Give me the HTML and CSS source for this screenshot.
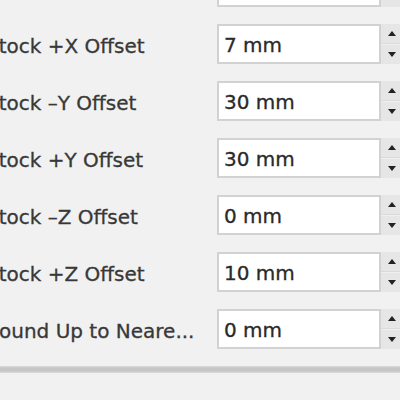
FILE: index.html
```html
<!DOCTYPE html>
<html>
<head>
<meta charset="utf-8">
<link rel="stylesheet" href="styles.css">
</head>
<body>
<div class="panel">
  <div class="rows">
    <div class="row"><span class="label">Stock –X Offset</span><div class="field"><span class="value">7 mm</span><div class="spin"><span class="up"></span><span class="down"></span></div></div></div>
    <div class="row"><span class="label">Stock +X Offset</span><div class="field"><span class="value">7 mm</span><div class="spin"><span class="up"></span><span class="down"></span></div></div></div>
    <div class="row"><span class="label">Stock –Y Offset</span><div class="field"><span class="value">30 mm</span><div class="spin"><span class="up"></span><span class="down"></span></div></div></div>
    <div class="row"><span class="label">Stock +Y Offset</span><div class="field"><span class="value">30 mm</span><div class="spin"><span class="up"></span><span class="down"></span></div></div></div>
    <div class="row"><span class="label">Stock –Z Offset</span><div class="field"><span class="value">0 mm</span><div class="spin"><span class="up"></span><span class="down"></span></div></div></div>
    <div class="row"><span class="label">Stock +Z Offset</span><div class="field"><span class="value">10 mm</span><div class="spin"><span class="up"></span><span class="down"></span></div></div></div>
    <div class="row"><span class="label">Round Up to Neare...</span><div class="field"><span class="value">0 mm</span><div class="spin"><span class="up"></span><span class="down"></span></div></div></div>
  </div>
  <div class="separator"></div>
</div>
</body>
</html>
```
FILE: styles.css
```css
html, body {
  margin: 0;
  padding: 0;
  background: #f1f1f1;
  overflow: hidden;
}
.panel {
  width: 400px;
  height: 400px;
  overflow: hidden;
  font-family: "DejaVu Sans", "Lucida Grande", sans-serif;
}
.rows {
  display: flex;
  flex-direction: column;
  gap: 17px;
  margin-top: -33px;
  margin-left: -14px;
}
.row {
  display: flex;
  align-items: center;
  height: 40px;
}
.label {
  width: 231px;
  flex: none;
  font-size: 20px;
  color: #383838;
  white-space: nowrap;
  padding-top: 3px;
  -webkit-text-stroke: 0.3px #383838;
}
.field {
  flex: none;
  display: flex;
  width: 200px;
  height: 40px;
  box-sizing: border-box;
}
.value {
  flex: none;
  width: 164px;
  height: 40px;
  box-sizing: border-box;
  background: #fff;
  border: 2px solid #d2d2d2;
  padding-left: 5px;
  padding-top: 2px;
  font-size: 20px;
  color: #2a2a2a;
  -webkit-text-stroke: 0.3px #2a2a2a;
  display: flex;
  align-items: center;
}
.spin {
  flex: none;
  width: 24px;
  height: 40px;
  display: flex;
  flex-direction: column;
  background: #e6e6e6;
}
.up, .down {
  flex: 1;
  display: flex;
  align-items: center;
  justify-content: center;
  padding-right: 2px;
}
.up {
  border-bottom: 1px solid #dadada;
}
.down {
  border-top: 1px solid #f0f0f0;
}
.up::after {
  content: "";
  border-left: 4px solid transparent;
  border-right: 4px solid transparent;
  border-bottom: 5px solid #222;
}
.down::after {
  content: "";
  border-left: 4px solid transparent;
  border-right: 4px solid transparent;
  border-top: 5px solid #222;
}
.separator {
  margin-top: 17px;
  height: 7px;
  background: linear-gradient(#dadada, #c6c6c6 30%, #c6c6c6 70%, #dcdcdc);
}
```
